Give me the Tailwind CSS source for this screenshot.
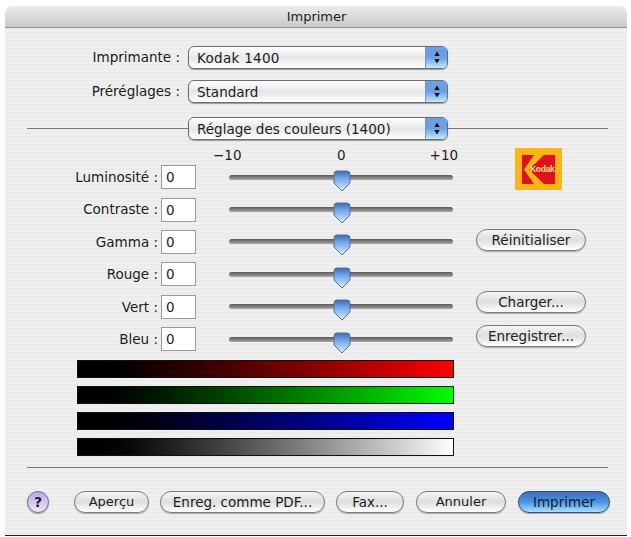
<!DOCTYPE html>
<html lang="fr">
<head>
<meta charset="utf-8">
<script src="https://cdn.jsdelivr.net/npm/@tailwindcss/browser@4"></script>
</head>
<body class="bg-white font-['DejaVu_Sans',sans-serif] text-[13.5px] text-[#1c1c1c] overflow-hidden">
<svg width="0" height="0" class="absolute">
  <defs>
    <linearGradient id="th" x1="0" y1="0" x2="0" y2="1">
      <stop offset="0" stop-color="#3b6cba"/><stop offset=".35" stop-color="#6ea3e6"/><stop offset="1" stop-color="#d6f2ff"/>
    </linearGradient>
  </defs>
</svg>
<div class="w-[631px] h-[537px] pt-[6px] pl-[5px] overflow-hidden">
  <div class="w-[622px] h-[530px] rounded-t-[8px] overflow-hidden flex flex-col border-b border-[#222] bg-[#eeeeee] bg-[repeating-linear-gradient(180deg,#efefef_0,#efefef_2px,#ebebeb_2px,#ebebeb_4px)]">
    <div class="h-[22px] shrink-0 flex items-center justify-center bg-gradient-to-b from-[#ececec] to-[#c9c9c9] border-b border-[#8f8f8f] pl-[1px] text-[13px]">Imprimer</div>

    <div class="flex items-center h-[23px] mt-[18px] shrink-0">
      <div class="w-[175px] text-right">Imprimante :</div>
      <div class="ml-[8px] w-[260px] h-[23px] flex rounded-[6px] border border-[#6d6d6d] overflow-hidden shadow-[0_1px_1px_#9a9a9a] bg-gradient-to-b from-white via-[#e6e6e6] to-white">
        <div class="flex-1 pl-[8px] leading-[22px] tracking-[0.3px]">Kodak 1400</div>
        <div class="w-[22px] flex items-center justify-center bg-gradient-to-b from-[#6f9de0] via-[#6ba0e4] to-[#c4e8fc] border-l border-[#7c98c2]"><svg width="6" height="13" viewBox="0 0 6 13"><path d="M3 0.5 5.7 5H0.3Z M3 12.5 5.7 8H0.3Z" fill="#111"/></svg></div>
      </div>
    </div>

    <div class="flex items-center h-[23px] mt-[11px] shrink-0">
      <div class="w-[175px] text-right">Préréglages :</div>
      <div class="ml-[8px] w-[260px] h-[23px] flex rounded-[6px] border border-[#6d6d6d] overflow-hidden shadow-[0_1px_1px_#9a9a9a] bg-gradient-to-b from-white via-[#e6e6e6] to-white">
        <div class="flex-1 pl-[8px] leading-[22px]">Standard</div>
        <div class="w-[22px] flex items-center justify-center bg-gradient-to-b from-[#6f9de0] via-[#6ba0e4] to-[#c4e8fc] border-l border-[#7c98c2]"><svg width="6" height="13" viewBox="0 0 6 13"><path d="M3 0.5 5.7 5H0.3Z M3 12.5 5.7 8H0.3Z" fill="#111"/></svg></div>
      </div>
    </div>

    <div class="flex items-center h-[23px] mt-[14px] shrink-0 pl-[22px]">
      <div class="w-[161px] h-px bg-[#7a7a7a]"></div>
      <div class="w-[260px] h-[23px] flex rounded-[6px] border border-[#6d6d6d] overflow-hidden shadow-[0_1px_1px_#9a9a9a] bg-gradient-to-b from-white via-[#e6e6e6] to-white">
        <div class="flex-1 pl-[8px] leading-[22px] whitespace-nowrap">Réglage des couleurs (1400)</div>
        <div class="w-[22px] flex items-center justify-center bg-gradient-to-b from-[#6f9de0] via-[#6ba0e4] to-[#c4e8fc] border-l border-[#7c98c2]"><svg width="6" height="13" viewBox="0 0 6 13"><path d="M3 0.5 5.7 5H0.3Z M3 12.5 5.7 8H0.3Z" fill="#111"/></svg></div>
      </div>
      <div class="w-[160px] h-px bg-[#7a7a7a]"></div>
    </div>

    <div class="relative shrink-0 flex h-[220px]">
      <div class="w-[448px] shrink-0">
        <div class="h-[21px] pt-[9px] flex items-center leading-none mt-[1px] whitespace-nowrap">
          <span class="ml-[208px] w-[26px]">−10</span><span class="ml-[98px] w-[9px]">0</span><span class="ml-[84px] w-[27px]">+10</span>
        </div>
        <div class="flex flex-col mt-[-1px]">
          <div class="flex items-center h-[32.4px]"><div class="w-[153px] text-right">Luminosité :</div><div class="ml-[3px] w-[35px] h-[24px] bg-white border border-[#9a9a9a] pl-[4px] leading-[23px]">0</div><div class="ml-[33px] relative w-[224px] h-[5px] rounded-full bg-gradient-to-b from-[#5a5a5a] to-[#a8a8a8]"><svg class="absolute left-[104px] top-[-5px]" width="18" height="22" viewBox="0 0 18 22"><path d="M1 4Q1 1 4 1H14Q17 1 17 4V13L9 21 1 13Z" fill="url(#th)" stroke="#5c6f90"/></svg></div></div>
          <div class="flex items-center h-[32.4px]"><div class="w-[153px] text-right">Contraste :</div><div class="ml-[3px] w-[35px] h-[24px] bg-white border border-[#9a9a9a] pl-[4px] leading-[23px]">0</div><div class="ml-[33px] relative w-[224px] h-[5px] rounded-full bg-gradient-to-b from-[#5a5a5a] to-[#a8a8a8]"><svg class="absolute left-[104px] top-[-5px]" width="18" height="22" viewBox="0 0 18 22"><path d="M1 4Q1 1 4 1H14Q17 1 17 4V13L9 21 1 13Z" fill="url(#th)" stroke="#5c6f90"/></svg></div></div>
          <div class="flex items-center h-[32.4px]"><div class="w-[153px] text-right">Gamma :</div><div class="ml-[3px] w-[35px] h-[24px] bg-white border border-[#9a9a9a] pl-[4px] leading-[23px]">0</div><div class="ml-[33px] relative w-[224px] h-[5px] rounded-full bg-gradient-to-b from-[#5a5a5a] to-[#a8a8a8]"><svg class="absolute left-[104px] top-[-5px]" width="18" height="22" viewBox="0 0 18 22"><path d="M1 4Q1 1 4 1H14Q17 1 17 4V13L9 21 1 13Z" fill="url(#th)" stroke="#5c6f90"/></svg></div></div>
          <div class="flex items-center h-[32.4px]"><div class="w-[153px] text-right">Rouge :</div><div class="ml-[3px] w-[35px] h-[24px] bg-white border border-[#9a9a9a] pl-[4px] leading-[23px]">0</div><div class="ml-[33px] relative w-[224px] h-[5px] rounded-full bg-gradient-to-b from-[#5a5a5a] to-[#a8a8a8]"><svg class="absolute left-[104px] top-[-5px]" width="18" height="22" viewBox="0 0 18 22"><path d="M1 4Q1 1 4 1H14Q17 1 17 4V13L9 21 1 13Z" fill="url(#th)" stroke="#5c6f90"/></svg></div></div>
          <div class="flex items-center h-[32.4px]"><div class="w-[153px] text-right">Vert :</div><div class="ml-[3px] w-[35px] h-[24px] bg-white border border-[#9a9a9a] pl-[4px] leading-[23px]">0</div><div class="ml-[33px] relative w-[224px] h-[5px] rounded-full bg-gradient-to-b from-[#5a5a5a] to-[#a8a8a8]"><svg class="absolute left-[104px] top-[-5px]" width="18" height="22" viewBox="0 0 18 22"><path d="M1 4Q1 1 4 1H14Q17 1 17 4V13L9 21 1 13Z" fill="url(#th)" stroke="#5c6f90"/></svg></div></div>
          <div class="flex items-center h-[32.4px]"><div class="w-[153px] text-right">Bleu :</div><div class="ml-[3px] w-[35px] h-[24px] bg-white border border-[#9a9a9a] pl-[4px] leading-[23px]">0</div><div class="ml-[33px] relative w-[224px] h-[5px] rounded-full bg-gradient-to-b from-[#5a5a5a] to-[#a8a8a8]"><svg class="absolute left-[104px] top-[-5px]" width="18" height="22" viewBox="0 0 18 22"><path d="M1 4Q1 1 4 1H14Q17 1 17 4V13L9 21 1 13Z" fill="url(#th)" stroke="#5c6f90"/></svg></div></div>
        </div>
      </div>
      <div class="flex flex-col">
        <div class="ml-[62px] mt-[8px] w-[47px] h-[42px] bg-[#fdb515] flex items-center justify-center">
          <div class="relative w-[33px] h-[29px] bg-[#e0101c] overflow-hidden">
            <svg class="absolute inset-0" width="33" height="29" viewBox="0 0 33 29"><path d="M12 0H22L7 14.5 22 29H12L2 14.5Z" fill="#fdb515"/></svg>
            <span class="absolute left-[8px] top-[9px] text-[8.5px] leading-[10px] font-bold text-[#ffe08a] tracking-[-0.3px] font-['Liberation_Sans',sans-serif]">Kodak</span>
          </div>
        </div>
        <button class="ml-[23px] mt-[39px] w-[110px] h-[22px] rounded-full border border-[#7c7c7c] shadow-[0_1px_1px_#aaa] bg-gradient-to-b from-[#f4f4f4] via-[#dedede] to-white text-[#222]">Réinitialiser</button>
        <button class="ml-[23px] mt-[40px] w-[110px] h-[22px] rounded-full border border-[#7c7c7c] shadow-[0_1px_1px_#aaa] bg-gradient-to-b from-[#f4f4f4] via-[#dedede] to-white text-[#222]">Charger...</button>
        <button class="ml-[23px] mt-[12px] w-[110px] h-[22px] rounded-full border border-[#7c7c7c] shadow-[0_1px_1px_#aaa] bg-gradient-to-b from-[#f4f4f4] via-[#dedede] to-white text-[#222]">Enregistrer...</button>
      </div>
    </div>

    <div class="ml-[72px] w-[377px] flex flex-col gap-[8px] shrink-0">
      <div class="h-[18px] border border-[#111] bg-gradient-to-r from-black to-[#ff0000]"></div>
      <div class="h-[18px] border border-[#111] bg-gradient-to-r from-black to-[#00ff00]"></div>
      <div class="h-[18px] border border-[#111] bg-gradient-to-r from-black to-[#0000ff]"></div>
      <div class="h-[18px] border border-[#111] bg-gradient-to-r from-black to-white"></div>
    </div>

    <div class="mt-[11px] ml-[22px] w-[581px] h-px bg-[#7a7a7a] shrink-0"></div>

    <div class="flex items-center mt-[23px] ml-[22px] h-[22px] shrink-0">
      <div class="w-[22px] h-[22px] rounded-full border border-[#6b6b8c] bg-gradient-to-b from-[#bba8ec] to-[#efe6ff] flex items-center justify-center font-bold text-[14px] shadow-[0_1px_1px_#999]">?</div>
      <button class="ml-[25px] w-[75px] h-[22px] rounded-full border border-[#7c7c7c] shadow-[0_1px_1px_#aaa] bg-gradient-to-b from-[#f4f4f4] via-[#dedede] to-white text-[13px]">Aperçu</button>
      <button class="ml-[11px] w-[165px] h-[22px] rounded-full border border-[#7c7c7c] shadow-[0_1px_1px_#aaa] bg-gradient-to-b from-[#f4f4f4] via-[#dedede] to-white">Enreg. comme PDF...</button>
      <button class="ml-[11px] w-[68px] h-[22px] rounded-full border border-[#7c7c7c] shadow-[0_1px_1px_#aaa] bg-gradient-to-b from-[#f4f4f4] via-[#dedede] to-white">Fax...</button>
      <button class="ml-[12px] w-[90px] h-[22px] rounded-full border border-[#7c7c7c] shadow-[0_1px_1px_#aaa] bg-gradient-to-b from-[#f4f4f4] via-[#dedede] to-white text-[13px]">Annuler</button>
      <button class="ml-[12px] w-[92px] h-[22px] rounded-full border border-[#2f4f88] shadow-[0_1px_1px_#aaa] bg-gradient-to-b from-[#3f6fb8] via-[#4a93ea] to-[#a9e0fd]">Imprimer</button>
    </div>
  </div>
</div>
</body>
</html>
